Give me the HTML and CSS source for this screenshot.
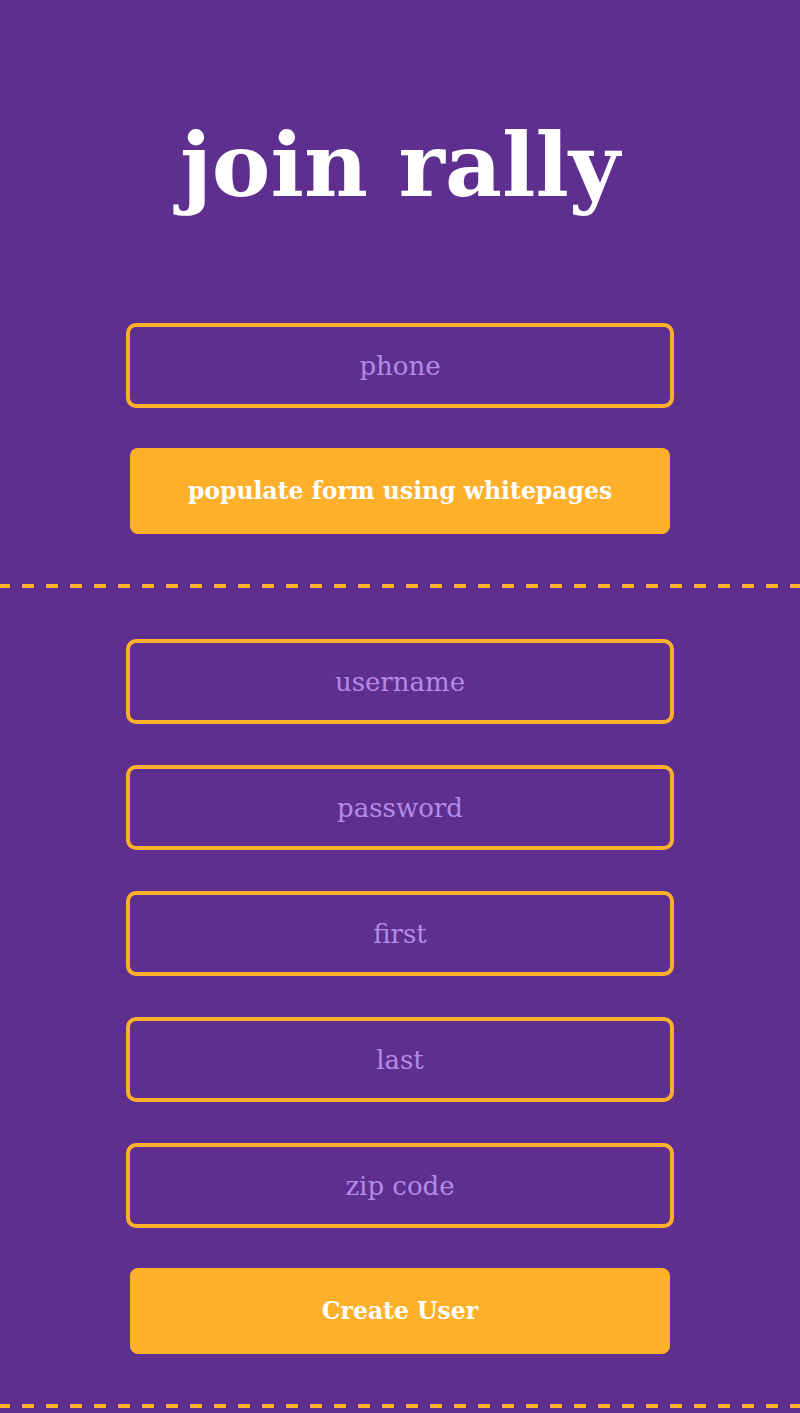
FILE: index.html
```html
<!DOCTYPE html>
<html lang="en">
<head>
<meta charset="utf-8">
<title>join rally</title>
<link rel="stylesheet" href="styles.css">
</head>
<body>
<main class="page">
  <h1 class="title">join rally</h1>
  <section class="section section-lookup">
    <input class="field" type="tel" placeholder="phone">
    <button class="btn" type="button">populate form using whitepages</button>
  </section>
  <hr class="divider">
  <form class="section section-signup">
    <input class="field" type="text" placeholder="username">
    <input class="field" type="password" placeholder="password">
    <input class="field" type="text" placeholder="first">
    <input class="field" type="text" placeholder="last">
    <input class="field" type="text" placeholder="zip code">
    <button class="btn" type="button">Create User</button>
  </form>
  <hr class="divider">
</main>
</body>
</html>
```

FILE: styles.css
```css
html, body {
  margin: 0;
  padding: 0;
  background: #5e2f8f;
}
body {
  font-family: "DejaVu Serif", "Liberation Serif", serif;
}
.page {
  display: flex;
  flex-direction: column;
  align-items: stretch;
}
.title {
  margin: 0;
  padding-top: 117px;
  font-size: 88px;
  line-height: 96px;
  font-weight: bold;
  color: #ffffff;
  text-align: center;
}
.section {
  display: flex;
  flex-direction: column;
  align-items: center;
  gap: 41px;
  padding: 50px 0;
}
.section-lookup {
  padding-top: 110px;
}
.section-signup {
  padding-top: 51px;
}
.divider {
  margin: 0;
  border: none;
  height: 4px;
  background: repeating-linear-gradient(to right, #ffb02b 0, #ffb02b 12px, transparent 12px, transparent 24px);
  background-position: -2px 0;
}
.field {
  box-sizing: border-box;
  width: 548px;
  height: 85px;
  margin: 0;
  border: 4px solid #ffb02b;
  border-radius: 10px;
  background: transparent;
  font-family: "DejaVu Serif", "Liberation Serif", serif;
  font-size: 26px;
  color: #ffffff;
  text-align: center;
  outline: none;
}
.field::placeholder {
  color: #b38be6;
  opacity: 1;
}
.btn {
  box-sizing: border-box;
  width: 540px;
  height: 86px;
  margin: -1px 0 0;
  border: none;
  border-radius: 8px;
  background: #ffb02b;
  color: #ffffff;
  font-family: "DejaVu Serif", "Liberation Serif", serif;
  font-size: 23.5px;
  font-weight: bold;
  cursor: pointer;
}
```
